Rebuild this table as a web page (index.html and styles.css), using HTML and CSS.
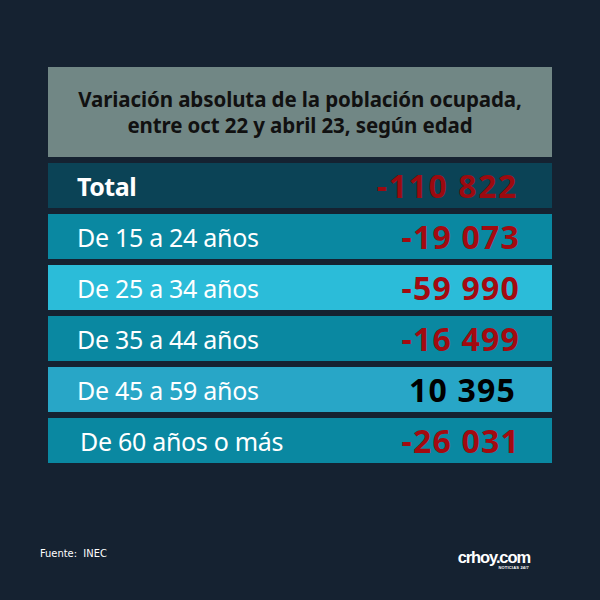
FILE: index.html
```html
<!DOCTYPE html>
<html lang="es">
<head>
<meta charset="utf-8">
<link rel="stylesheet" href="styles.css">
</head>
<body>
<div class="page">
  <div class="table">
    <div class="title">Variación absoluta de la población ocupada,<br>entre oct 22 y abril 23, según edad</div>
    <div class="row total"><span class="label">Total</span><span class="num neg">-110 822</span></div>
    <div class="row c1"><span class="label">De 15 a 24 años</span><span class="num neg">-19 073</span></div>
    <div class="row c2"><span class="label">De 25 a 34 años</span><span class="num neg">-59 990</span></div>
    <div class="row c1"><span class="label">De 35 a 44 años</span><span class="num neg">-16 499</span></div>
    <div class="row c3"><span class="label">De 45 a 59 años</span><span class="num pos">10 395</span></div>
    <div class="row c1 last"><span class="label">De 60 años o más</span><span class="num neg">-26 031</span></div>
  </div>
  <div class="footer">
    <span class="source">Fuente:&nbsp; INEC</span>
    <div class="logo"><span class="logo-main">crhoy.com</span><span class="logo-sub">NOTICIAS 24/7</span></div>
  </div>
</div>
</body>
</html>
```
FILE: styles.css
```css
html, body {
  margin: 0;
  padding: 0;
  background: #152231;
}
.page {
  width: 600px;
  height: 600px;
  box-sizing: border-box;
  padding: 67px 48px 0 48px;
  font-family: "Noto Sans", "Open Sans", sans-serif;
  display: flex;
  flex-direction: column;
}
.table {
  display: flex;
  flex-direction: column;
  gap: 6px;
}
.title {
  height: 90px;
  background: #718785;
  color: #111;
  font-weight: 700;
  font-size: 20.5px;
  line-height: 26px;
  text-align: center;
  display: flex;
  align-items: center;
  justify-content: center;
  letter-spacing: -0.1px;
}
.row {
  height: 45px;
  display: flex;
  align-items: center;
  justify-content: space-between;
  padding: 0 32px 0 29px;
}
.total { background: #0b4356; }
.c1 { background: #0a88a1; }
.c2 { background: #2bbcd9; }
.c3 { background: #28a6c7; }
.label {
  color: #fff;
  font-size: 25px;
  letter-spacing: -0.3px;
}
.total .label {
  font-weight: 700;
  font-size: 25px;
  letter-spacing: -0.5px;
}
.last .label { padding-left: 3px; }
.num {
  font-size: 32px;
  font-weight: 700;
  letter-spacing: 1.2px;
}
.total .num {
  font-size: 32px;
  letter-spacing: 1.6px;
  margin-right: 2px;
  color: #9c0a10;
}
.neg { color: #a30a10; }
.pos { color: #000; padding-right: 4px; }
.footer {
  margin-top: 82px;
  display: flex;
  justify-content: space-between;
  align-items: flex-start;
  margin-left: -8px;
  padding-right: 22px;
}
.source {
  color: #fff;
  font-size: 11px;
  font-family: "DejaVu Sans Condensed", "Noto Sans", sans-serif;
  padding-top: 2px;
}
.logo {
  display: flex;
  flex-direction: column;
  align-items: flex-end;
  margin-top: 5px;
}
.logo-main {
  color: #fff;
  font-family: "Liberation Sans", sans-serif;
  font-weight: 700;
  font-size: 16.5px;
  line-height: 15px;
  letter-spacing: -1.1px;
}
.logo-sub {
  color: #fff;
  font-family: "Liberation Sans", sans-serif;
  font-weight: 700;
  font-size: 4px;
  line-height: 6px;
  letter-spacing: 0.2px;
  margin-right: 1px;
}
```
